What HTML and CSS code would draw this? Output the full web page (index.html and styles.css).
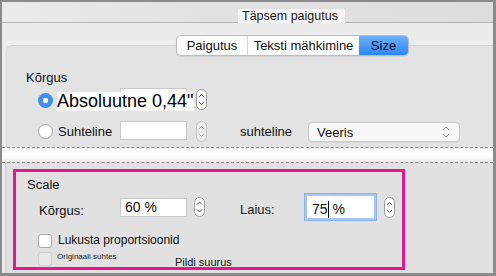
FILE: index.html
```html
<!DOCTYPE html>
<html lang="et">
<head>
<meta charset="utf-8">
<title>Täpsem paigutus</title>
<link rel="stylesheet" href="styles.css">
</head>
<body>
<div class="win">
  <div class="titlebar"><span class="title">Täpsem paigutus</span></div>
  <div class="tabs-area">
    <div class="seg">
      <span class="seg-item s1">Paigutus</span>
      <span class="seg-item s2">Teksti mähkimine</span>
      <span class="seg-item s3 active">Size</span>
    </div>
  </div>
  <div class="panel-top">
    <div class="group-label">Kõrgus</div>
    <div class="row row1">
      <span class="radio on"></span>
      <div class="stack">
        <span class="field big-field"></span>
        <span class="big-text">Absoluutne 0,44"</span>
      </div>
      <svg class="stepper st1" width="11" height="21" viewBox="0 0 11 21"><rect x="0.5" y="0.5" width="10" height="20" rx="5" fill="#fff" stroke="#9c9c9c"/><path d="M3 8 L5.5 5.5 L8 8" fill="none" stroke="#555" stroke-width="1"/><path d="M3 13 L5.5 15.5 L8 13" fill="none" stroke="#555" stroke-width="1"/></svg>
    </div>
    <div class="row row2">
      <span class="radio"></span>
      <span class="lbl lbl-suht">Suhteline</span>
      <span class="field field2"></span>
      <svg class="stepper st2" width="11" height="21" viewBox="0 0 11 21"><rect x="0.5" y="0.5" width="10" height="20" rx="5" fill="#ececec" stroke="#c4c4c4"/><path d="M3 8 L5.5 5.5 L8 8" fill="none" stroke="#a8a8a8" stroke-width="1"/><path d="M3 13 L5.5 15.5 L8 13" fill="none" stroke="#a8a8a8" stroke-width="1"/></svg>
      <span class="lbl lbl-rel">suhteline</span>
      <div class="select">
        <span>Veeris</span>
        <svg width="8" height="14" viewBox="0 0 8 14"><path d="M1 5 L4 2 L7 5" fill="none" stroke="#8a8a8a"/><path d="M1 9 L4 12 L7 9" fill="none" stroke="#8a8a8a"/></svg>
      </div>
    </div>
  </div>
  <div class="band"></div>
  <div class="panel-bottom">
    <div class="pink">
      <div class="scale-label">Scale</div>
      <div class="row row3">
        <span class="lbl lbl-k">Kõrgus:</span>
        <span class="field field3">60 %</span>
        <svg class="stepper st3" width="11" height="20" viewBox="0 0 11 20"><rect x="0.5" y="0.5" width="10" height="19" rx="5" fill="#fff" stroke="#9c9c9c"/><path d="M3 7.5 L5.5 5 L8 7.5" fill="none" stroke="#555"/><path d="M3 12.5 L5.5 15 L8 12.5" fill="none" stroke="#555"/></svg>
        <span class="lbl lbl-l">Laius:</span>
        <span class="field focus">75<span class="caret"></span> %</span>
        <svg class="stepper st4" width="11" height="21" viewBox="0 0 11 21"><rect x="0.5" y="0.5" width="10" height="20" rx="5" fill="#fff" stroke="#9c9c9c"/><path d="M3 8 L5.5 5.5 L8 8" fill="none" stroke="#555"/><path d="M3 13 L5.5 15.5 L8 13" fill="none" stroke="#555"/></svg>
      </div>
      <div class="row check-row">
        <span class="cb"></span>
        <span class="cb-text">Lukusta proportsioonid</span>
      </div>
      <div class="row check-row2">
        <span class="cb dis"></span>
        <span class="tiny">Originaali suhtes</span>
        <span class="pildi">Pildi suurus</span>
      </div>
    </div>
  </div>
</div>
</body>
</html>
```

FILE: styles.css
```css
* { box-sizing: border-box; }
html, body { margin: 0; padding: 0; }
body {
  font-family: "Liberation Sans", Arial, sans-serif;
  font-size: 13px;
  color: #111;
  background: #fff;
}
.win {
  width: 496px;
  height: 276px;
  border-style: solid;
  border-color: #8b8b8b;
  border-width: 2px 3px 3px 2px;
  background: #ececec;
  display: flex;
  flex-direction: column;
  overflow: hidden;
}
.titlebar {
  height: 21px;
  flex: none;
  border-bottom: 1px solid #b4b4b4;
  background: linear-gradient(to right, #ebebeb 0%, #e2e2e2 40%, #dddddd 100%);
  padding: 6px 0 0 236px;
}
.title {
  display: inline-block;
  background: #f4f4f4;
  height: 14px;
  width: 107px;
  padding-left: 4px;
  line-height: 14px;
  font-size: 12.5px;
  color: #1a1a1a;
}
.tabs-area {
  height: 22px;
  flex: none;
  padding: 12px 0 0 174px;
}
.seg {
  position: relative;
  z-index: 2;
  display: flex;
  width: 233px;
  height: 21px;
  border: 1px solid #bdbdbd;
  border-radius: 5px;
  background: #fff;
  overflow: hidden;
  box-shadow: 0 1px 1px rgba(0,0,0,0.08);
}
.seg-item {
  display: flex;
  align-items: center;
  justify-content: center;
  height: 19px;
  font-size: 13px;
  color: #111;
}
.s1 { width: 71px; border-right: 1px solid #d6d6d6; }
.s2 { width: 111px; }
.s3 { width: 49px; padding-left: 0; }
.active {
  background: linear-gradient(#6db0fb, #2d86f6);
  color: #0b0b2a;
}
.panel-top {
  height: 102px;
  flex: none;
  margin-left: 4px;
  border-top: 1px solid #d2d2d2;
  border-left: 1px solid #d8d8d8;
  border-top-left-radius: 6px;
  background: #e3e3e3;
  padding: 24px 0 0 19px;
}
.group-label {
  line-height: 15px;
  font-size: 13px;
}
.row {
  display: flex;
  align-items: center;
}
.row1 {
  height: 23px;
  margin-top: 3px;
  padding-left: 12px;
}
.radio {
  width: 15px;
  height: 15px;
  border-radius: 50%;
  border: 1px solid #a4a4a4;
  background: #fff;
  flex: none;
}
.radio.on {
  border: none;
  background: radial-gradient(circle, #fff 0 2.6px, #3d8ff5 3px);
}
.row1 .radio { margin-top: 2px; }
.stack {
  display: grid;
  margin-left: 4px;
  height: 23px;
}
.stack > * { grid-area: 1 / 1; }
.field {
  display: block;
  background: #fff;
  border: 1px solid #c9c9c9;
  flex: none;
}
.big-field {
  margin-left: 63px;
  width: 67px;
  height: 23px;
}
.big-text {
  align-self: end;
  justify-self: start;
  position: relative;
  background: #fff;
  height: 19px;
  line-height: 19px;
  font-size: 18px;
  color: #000;
  white-space: nowrap;
}
.stepper { display: block; flex: none; }
.st1 { margin-left: 2px; align-self: flex-start; margin-top: 1px; }
.row2 {
  height: 21px;
  margin-top: 10px;
  padding-left: 12px;
}
.lbl { flex: none; white-space: nowrap; }
.lbl-suht { width: 67px; padding-left: 5px; }
.field2 { width: 67px; height: 19px; align-self: flex-start; }
.st2 { margin-left: 9px; }
.lbl-rel { margin-left: 33px; width: 68px; }
.select {
  width: 152px;
  height: 20px;
  border: 1px solid #cacaca;
  border-radius: 4px;
  background: #f8f8f8;
  display: flex;
  align-items: center;
  justify-content: space-between;
  padding: 0 9px 0 8px;
  box-shadow: 0 1px 0 rgba(0,0,0,0.05);
}
.select span { font-size: 13px; padding-top: 2px; }
.band {
  height: 16px;
  flex: none;
  border-top: 1px dashed #8c8c8c;
  border-bottom: 1px dashed #8c8c8c;
  background: linear-gradient(#f2f2f2, #ffffff 40%, #fafafa 75%, #e8e8e8);
}
.panel-bottom {
  flex: 1;
  background: #e1e1e1;
  margin-left: 3px;
  border-left: 1px solid #cfcfcf;
  padding: 6px 0 0 7px;
}
.pink {
  width: 392px;
  height: 101px;
  border: 3px solid #e7168b;
  padding: 5px 0 0 11px;
}
.scale-label {
  line-height: 15px;
  font-size: 13px;
}
.row3 {
  height: 28px;
  margin-top: 1px;
  padding-left: 12px;
}
.lbl-k { width: 81px; padding-top: 6px; }
.field3 {
  width: 67px;
  height: 19px;
  line-height: 17px;
  padding-left: 4px;
  font-size: 14px;
}
.st3 { margin-left: 7px; }
.lbl-l { margin-left: 35px; width: 64px; padding-top: 4px; color: #222; }
.focus {
  width: 73px;
  height: 28px;
  border: 1px solid #86b3ec;
  box-shadow: inset 0 0 0 2px #a7c8f2;
  padding: 4px 0 0 7px;
  line-height: 18px;
  font-size: 14px;
  display: flex;
  align-items: center;
}
.caret {
  display: inline-block;
  width: 1px;
  height: 17px;
  background: #000;
  margin: 0 4px 0 0;
}
.st4 { margin-left: 7px; }
.check-row {
  margin-top: 12px;
  padding-left: 11px;
  height: 15px;
}
.cb {
  width: 14px;
  height: 14px;
  border: 1px solid #a9a9a9;
  border-radius: 3px;
  background: #fff;
  flex: none;
}
.cb.dis {
  border-color: #cfcfcf;
  background: #e9e9e9;
}
.cb-text {
  margin-left: 6px;
  font-size: 12px;
  line-height: 15px;
}
.check-row2 {
  margin-top: 4px;
  padding-left: 11px;
  height: 14px;
  align-items: flex-start;
}
.tiny {
  margin-left: 5px;
  font-size: 8px;
  line-height: 10px;
  color: #222;
  width: 118px;
}
.pildi {
  font-size: 11px;
  line-height: 14px;
  padding-top: 3px;
}
```
